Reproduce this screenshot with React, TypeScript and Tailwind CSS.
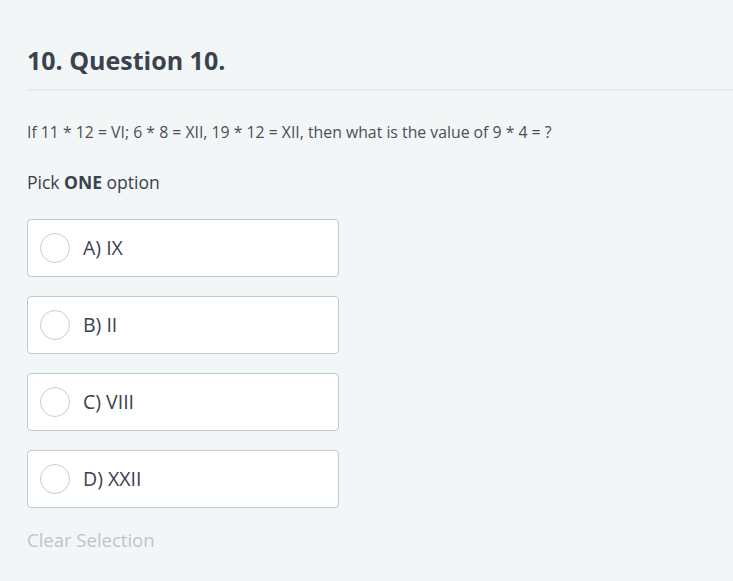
import React from "react";

const options = ["A) IX", "B) II", "C) VIII", "D) XXII"];

export default function App() {
  return (
    <div
      className="min-h-[581px] w-full bg-[#f3f6f7] text-[#39424e]"
      style={{ fontFamily: '"Open Sans", sans-serif' }}
    >
      <div className="pl-[27px] pt-[42px]">
        <h1 className="text-[25px] font-bold leading-[36px] pb-[11px] border-b-2 border-[#e6ecee]">
          10. Question 10.
        </h1>
        <p className="mt-[30px] text-[15.8px] leading-[22px] text-[#484f57]">
          If 11 * 12 = VI; 6 * 8 = XII, 19 * 12 = XII, then what is the value of 9 * 4 = ?
        </p>
        <p className="mt-[27px] text-[17.5px] leading-[24px]">
          Pick <span className="font-bold">ONE</span> option
        </p>
        <div className="mt-[25px] flex flex-col gap-[19px]">
          {options.map((o) => (
            <div
              key={o}
              className="w-[312px] h-[58px] bg-white border border-[#bccbd0] rounded-[4px] flex items-center pl-[12px]"
            >
              <div className="w-[30px] h-[30px] rounded-full border border-[#c2d0d4] bg-white" />
              <span className="ml-[13px] text-[19.5px]">{o}</span>
            </div>
          ))}
        </div>
        <div className="mt-[19px] text-[18.5px] leading-[26px] text-[#b8c6cb]">Clear Selection</div>
      </div>
    </div>
  );
}
